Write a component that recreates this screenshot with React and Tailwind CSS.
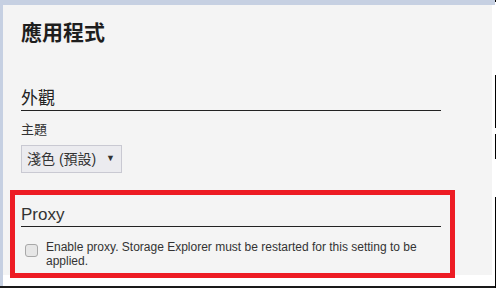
export default function App() {
  const font = { fontFamily: '"Liberation Sans", "Noto Sans CJK TC", sans-serif' };
  return (
    <div className="w-[496px] h-[288px] bg-white flex overflow-hidden" style={font}>
      <div className="w-[495px] h-[288px] flex flex-col">
        <div className="h-[5px] shrink-0 bg-[#c6d0e2]" />
        <div className="flex h-[281px] shrink-0">
          <div className="w-[3px] bg-[#c6d0e2]" />
          <div className="w-[489px] flex flex-col">
            <div className="h-[270px] shrink-0 bg-[#f4f4f4] pt-[14px] pl-[18px] pr-[51px]">
              <h1 className="text-[21px] leading-[28px] font-bold text-[#1e1e1e]">應用程式</h1>
              <div className="mt-[42px] text-[17px] leading-[20px] pb-[1px] border-b border-[#222] text-[#222]">外觀</div>
              <div className="mt-[11px] text-[13px] leading-[16px] text-[#333]">主題</div>
              <div className="mt-[7px] w-[101px] h-[28px] bg-[#ebebef] border border-[#c9c9d2] flex items-center justify-between pl-[5px] pr-[6px] text-[14px] text-[#333]">
                <span>淺色 (預設)</span>
                <span className="text-[9px]">▼</span>
              </div>
              <div className="mt-[17px] ml-[-11px] mr-[-14px] border-[5px] border-[#ed1c24] pt-[10px] pl-[6px] pr-[9px] pb-[5px]">
                <div className="text-[17px] leading-[20px] pb-[1px] border-b border-[#222] text-[#333]">Proxy</div>
                <div className="mt-[13px] flex items-start text-[12px] leading-[14px] text-[#333]">
                  <span className="ml-[4px] mt-[4px] w-[13px] h-[13px] shrink-0 rounded-[3px] border border-[#a8a8a8] bg-[#e6e6e6]" />
                  <span className="ml-[8px]">Enable proxy. Storage Explorer must be restarted for this setting to be applied.</span>
                </div>
              </div>
            </div>
            <div className="flex-1" />
          </div>
          <div className="w-[3px]" />
        </div>
        <div className="h-[2px] shrink-0 bg-[#1a1a1a]" />
      </div>
      <div className="w-[1px] flex flex-col">
        <div className="h-[2px] bg-black" />
        <div className="h-[73px]" />
        <div className="h-[53px] bg-black" />
        <div className="h-[6px]" />
        <div className="h-[25px] bg-black" />
        <div className="h-[38px]" />
        <div className="h-[91px] bg-black" />
      </div>
    </div>
  );
}
